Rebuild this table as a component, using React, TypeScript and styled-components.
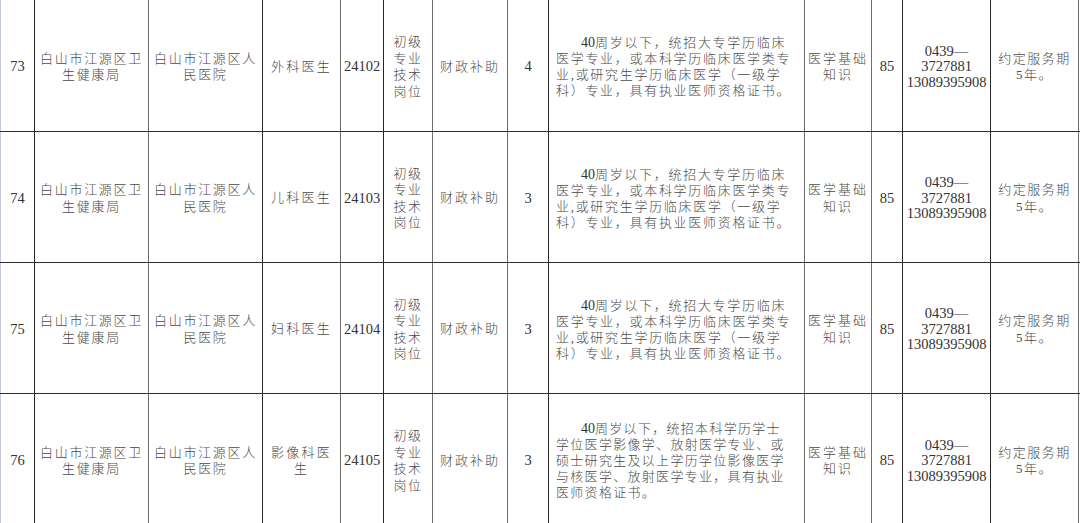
import React from "react";
import styled, { createGlobalStyle } from "styled-components";

const Global = createGlobalStyle`
  html, body { margin: 0; padding: 0; background: #ffffff; }
  body { width: 1080px; height: 523px; overflow: hidden; }
`;

type Tone = "light" | "dark" | "gray";

const toneColor: Record<Tone, string> = {
  light: "#c3cadb",
  dark: "#262626",
  gray: "#6f6f6f",
};

const columns: { w: number; tone: Tone }[] = [
  { w: 34, tone: "light" },
  { w: 114, tone: "dark" },
  { w: 114, tone: "gray" },
  { w: 78, tone: "dark" },
  { w: 43, tone: "gray" },
  { w: 49, tone: "dark" },
  { w: 75, tone: "gray" },
  { w: 41, tone: "gray" },
  { w: 256, tone: "dark" },
  { w: 67, tone: "gray" },
  { w: 31, tone: "gray" },
  { w: 88, tone: "dark" },
  { w: 89, tone: "dark" },
];

const Sheet = styled.div`
  width: 1080px;
  display: flex;
  flex-direction: column;
  background: #fff;
`;

const Row = styled.div<{ $h: number; $last?: boolean }>`
  display: grid;
  grid-template-columns: ${columns.map((c) => `${c.w}px`).join(" ")};
  height: ${(p) => p.$h}px;
  box-sizing: border-box;
  border-bottom: ${(p) => (p.$last ? "none" : "1px solid #2e2e2e")};
`;

const Cell = styled.div<{ $tone: Tone; $end?: boolean; $align?: string }>`
  box-sizing: border-box;
  border-left: 1px solid ${(p) => toneColor[p.$tone]};
  border-right: ${(p) => (p.$end ? `1px solid ${toneColor.gray}` : "none")};
  display: flex;
  align-items: center;
  justify-content: ${(p) => p.$align ?? "center"};
  overflow: hidden;
  padding-top: 3px;
`;

const Num = styled.span`
  font-family: "Liberation Serif", "Times New Roman", serif;
  font-size: 14.5px;
  line-height: 15.5px;
  color: #333333;
  text-align: center;
  white-space: pre-line;
`;

const Han = styled.span<{ $ls?: number }>`
  font-family: "Liberation Serif", "Noto Sans CJK SC", serif;
  font-weight: 300;
  font-size: 13px;
  line-height: 16.5px;
  letter-spacing: ${(p) => p.$ls ?? 1.7}px;
  color: #4a4a4a;
  text-align: center;
  white-space: pre-line;
`;

const Para = styled.div<{ $ls: number }>`
  font-family: "Liberation Serif", "Noto Sans CJK SC", serif;
  font-weight: 300;
  font-size: 13px;
  letter-spacing: ${(p) => p.$ls}px;
  color: #4a4a4a;
  padding-left: 7px;
  display: flex;
  flex-direction: column;
`;

const Line = styled.span<{ $indent?: boolean }>`
  white-space: nowrap;
  height: 16px;
  line-height: 16px;
  padding-left: ${(p) => (p.$indent ? "25px" : "0")};
`;

const Digits = styled.span`
  font-family: "Liberation Serif", serif;
  font-size: 14px;
  letter-spacing: 0;
  color: #333;
`;

type RowData = {
  no: string;
  job: string;
  code: string;
  count: string;
  lines: string[];
  ls: number;
};

const common73 = [
  "周岁以下，统招大专学历临床",
  "医学专业，或本科学历临床医学类专",
  "业,或研究生学历临床医学（一级学",
  "科）专业，具有执业医师资格证书。",
];

const rows: RowData[] = [
  { no: "73", job: "外科医生", code: "24102", count: "4", lines: common73, ls: 1.7 },
  { no: "74", job: "儿科医生", code: "24103", count: "3", lines: common73, ls: 1.7 },
  { no: "75", job: "妇科医生", code: "24104", count: "3", lines: common73, ls: 1.7 },
  {
    no: "76",
    job: "影像科医\n生",
    code: "24105",
    count: "3",
    lines: [
      "周岁以下，统招本科学历学士",
      "学位医学影像学、放射医学专业、或",
      "硕士研究生及以上学历学位影像医学",
      "与核医学、放射医学专业，具有执业",
      "医师资格证书。",
    ],
    ls: 1.3,
  },
];

export default function App() {
  return (
    <>
      <Global />
      <Sheet>
        {rows.map((r, i) => {
          const t = columns.map((c) => c.tone);
          return (
            <Row key={r.no} $h={i === 0 ? 132 : 131} $last={i === rows.length - 1}>
              <Cell $tone={t[0]}>
                <Num>{r.no}</Num>
              </Cell>
              <Cell $tone={t[1]}>
                <Han>{"白山市江源区卫\n生健康局"}</Han>
              </Cell>
              <Cell $tone={t[2]}>
                <Han>{"白山市江源区人\n民医院"}</Han>
              </Cell>
              <Cell $tone={t[3]}>
                <Han $ls={2.2}>{r.job}</Han>
              </Cell>
              <Cell $tone={t[4]}>
                <Num>{r.code}</Num>
              </Cell>
              <Cell $tone={t[5]}>
                <Han $ls={1.5}>{"初级\n专业\n技术\n岗位"}</Han>
              </Cell>
              <Cell $tone={t[6]}>
                <Han $ls={2}>财政补助</Han>
              </Cell>
              <Cell $tone={t[7]}>
                <Num>{r.count}</Num>
              </Cell>
              <Cell $tone={t[8]} $align="flex-start">
                <Para $ls={r.ls}>
                  {r.lines.map((l, k) => (
                    <Line key={k} $indent={k === 0}>
                      {k === 0 && <Digits>40</Digits>}
                      {l}
                    </Line>
                  ))}
                </Para>
              </Cell>
              <Cell $tone={t[9]}>
                <Han $ls={2}>{"医学基础\n知识"}</Han>
              </Cell>
              <Cell $tone={t[10]}>
                <Num>85</Num>
              </Cell>
              <Cell $tone={t[11]}>
                <Num>{"0439—\n3727881\n13089395908"}</Num>
              </Cell>
              <Cell $tone={t[12]} $end>
                <Han $ls={1.5}>{"约定服务期\n5年。"}</Han>
              </Cell>
            </Row>
          );
        })}
      </Sheet>
    </>
  );
}
